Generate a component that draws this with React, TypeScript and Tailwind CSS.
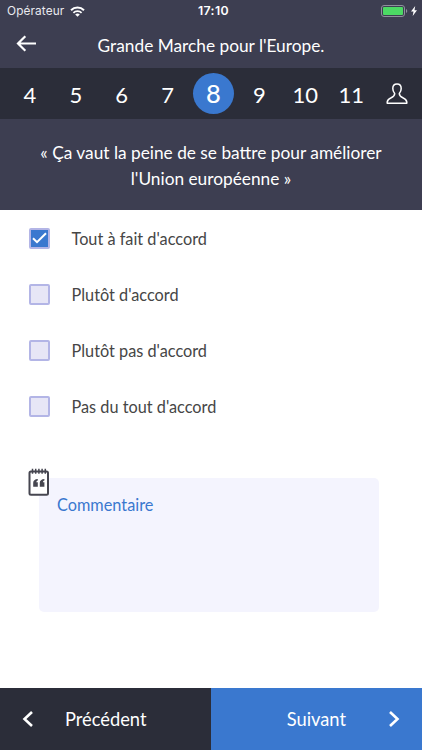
import { useState } from "react";

const STEPS = ["4", "5", "6", "7", "8", "9", "10", "11"];

const ANSWERS = [
    "Tout à fait d'accord",
    "Plutôt d'accord",
    "Plutôt pas d'accord",
    "Pas du tout d'accord",
];

function StatusBar() {
    return (
        <div className="grid h-[22px] grid-cols-3 items-center pr-[5px] pl-[7px] font-['Inter','Liberation_Sans',sans-serif] text-[12px] text-white">
            <div className="flex items-center gap-[6px]">
                <span className="pt-px text-[11.8px] tracking-[0.01em] text-[#e9e9ef]">Opérateur</span>
                <svg width="15" height="11" viewBox="0 0 15 11" fill="none" stroke="#fff">
                    <path d="M1 4.2a9.3 9.3 0 0 1 13 0" strokeWidth="2" />
                    <path d="M3.4 6.8a5.9 5.9 0 0 1 8.2 0" strokeWidth="1.8" />
                    <path d="M7.5 10.8 5.2 8.5a3.3 3.3 0 0 1 4.6 0z" fill="#fff" stroke="none" />
                </svg>
            </div>
            <span className="pt-px pl-[3px] text-center text-[12.3px] font-semibold tracking-[0.03em]">17:10</span>
            <div className="flex items-center justify-end gap-[3px]">
                <svg width="27" height="12" viewBox="0 0 27 12">
                    <rect x="0.5" y="0.5" width="23" height="11" rx="2.5" fill="none" stroke="#8f909c" />
                    <rect x="2" y="2" width="20" height="8" rx="1" fill="#4cd964" />
                    <path d="M25 4v4a2.2 2.2 0 0 0 0-4z" fill="#8f909c" />
                </svg>
                <svg width="6" height="10" viewBox="0 0 6 10" fill="#fff">
                    <path d="M4.2 0 0 5.6h2.5L1.7 10 6 4.2H3.5z" />
                </svg>
            </div>
        </div>
    );
}

function PawnIcon() {
    return (
        <svg
            width="22"
            height="22"
            viewBox="0 0 22 22"
            fill="none"
            stroke="#fff"
            strokeWidth="1.5"
            strokeLinejoin="round"
        >
            <path d="M1.2 20.3v-1.3c.4-2.3 1.8-3.4 4-4.3 2.4-1 3.500-2.100 3.500-4.200C7.500 9.200 6.800 7.400 6.800 5.500 6.800 2.900 8.600 1.100 11 1.100s4.200 1.800 4.200 4.400c0 1.900-.7 3.700-1.900 5 0 2.100 1.100 3.200 3.500 4.200 2.200.9 3.600 2 4 4.300v1.300z" />
        </svg>
    );
}

function NotepadIcon() {
    return (
        <svg width="22" height="28" viewBox="0 0 22 28" fill="none" stroke="#464650">
            <rect x="1.5" y="3.5" width="18.5" height="23.2" rx="1.5" fill="#fff" strokeWidth="2" />
            <path d="M4.5.8v5M7.7.8v5M10.9.8v5M14.1.8v5M17.3.8v5" strokeWidth="1.5" />
            <g fill="#464650" stroke="none">
                <path d="M9.8 11v1.5c-1 .3-1.5.9-1.5 1.8h1.5v4.5H5.2v-4c0-2.2 1.7-3.6 4.6-3.8z" />
                <path d="M16.4 11v1.5c-1 .3-1.5.9-1.5 1.8h1.5v4.5h-4.6v-4c0-2.2 1.7-3.6 4.6-3.8z" />
            </g>
        </svg>
    );
}

type AnswerRowProps = {
    label: string;
    checked: boolean;
    onSelect: () => void;
};

function AnswerRow({ label, checked, onSelect }: AnswerRowProps) {
    return (
        <button
            type="button"
            role="checkbox"
            aria-checked={checked}
            onClick={onSelect}
            className="flex h-[56px] items-center gap-[21.500px] text-left"
        >
            <span
                className={`flex size-[21px] items-center justify-center rounded-[2px] border-2 border-[#b3b5e6] ${
                    checked ? "bg-[#3a78cf]" : "bg-[#e7e6f6]"
                }`}
            >
                {checked && (
                    <svg width="15" height="12" viewBox="0 0 15 12" fill="none" stroke="#fff" strokeWidth="2">
                        <path d="M1 6.3 5 10.2 14 1.2" />
                    </svg>
                )}
            </span>
            <span className="pt-[2px] text-[16.3px] text-[#464646]">{label}</span>
        </button>
    );
}

function App() {
    const [answer, setAnswer] = useState(0);

    return (
        <div className="flex h-[750px] w-[422px] flex-col overflow-hidden bg-white font-['Lato',sans-serif]">
            <header className="h-[68px] bg-[#3d3e51]">
                <StatusBar />
                <div className="relative flex h-[46px] items-center justify-center text-[17.3px] text-white">
                    <button type="button" aria-label="Retour" className="absolute top-[13px] left-[16px]">
                        <svg width="21" height="17" viewBox="0 0 21 17" fill="none" stroke="#fff" strokeWidth="2.2">
                            <path d="M20 8.5H2M9.3 1.2 2 8.5l7.3 7.3" />
                        </svg>
                    </button>
                    <h1 className="pt-[2px]">Grande Marche pour l'Europe.</h1>
                </div>
            </header>

            <nav className="grid h-[51px] grid-cols-9 items-center justify-items-center bg-[#2b2d39] pr-[2px] pl-[7px] text-[22px] text-white">
                {STEPS.map((step) =>
                    step === "8" ? (
                        <span
                            key={step}
                            className="flex size-[41px] items-center justify-center rounded-full bg-[#3a78cf] text-[25.5px] font-medium"
                        >
                            {step}
                        </span>
                    ) : (
                        <span key={step} className="pt-[2px]">
                            {step}
                        </span>
                    ),
                )}
                <PawnIcon />
            </nav>

            <section className="flex h-[91px] items-center justify-center bg-[#3d3e51] pt-[2px] text-center text-[17.3px] leading-[26px] text-white">
                <p>
                    « Ça vaut la peine de se battre pour améliorer
                    <br />
                    l'Union européenne »
                </p>
            </section>

            <main className="flex flex-1 flex-col">
                <div className="flex flex-col pl-[29px]">
                    {ANSWERS.map((label, i) => (
                        <AnswerRow key={label} label={label} checked={i === answer} onSelect={() => setAnswer(i)} />
                    ))}
                </div>
                <div className="relative mt-[44px] ml-[39px] h-[134px] w-[340px] rounded-[5px] bg-[#f4f4fe]">
                    <textarea
                        placeholder="Commentaire"
                        className="size-full resize-none px-[18px] pt-[15px] text-[16.3px] leading-6 outline-none placeholder:text-[#3a78cf]"
                    />
                    <div className="absolute -top-[10px] -left-[11px]">
                        <NotepadIcon />
                    </div>
                </div>
            </main>

            <footer className="grid h-[62px] grid-cols-2 text-[18.3px] text-white">
                <button type="button" className="flex items-center bg-[#2b2d39] pl-[22px]">
                    <svg width="12" height="16" viewBox="0 0 12 16" fill="none" stroke="#fff" strokeWidth="2.6">
                        <path d="M10 1 2.5 8l7.5 7" />
                    </svg>
                    <span className="ml-[31px] pt-[2px]">Précédent</span>
                </button>
                <button type="button" className="flex items-center justify-end bg-[#3a78cf] pr-[22px]">
                    <span className="mr-[42px] pt-[2px]">Suivant</span>
                    <svg width="12" height="16" viewBox="0 0 12 16" fill="none" stroke="#fff" strokeWidth="2.6">
                        <path d="M2 1l7.5 7L2 15" />
                    </svg>
                </button>
            </footer>
        </div>
    );
}

export default App;
